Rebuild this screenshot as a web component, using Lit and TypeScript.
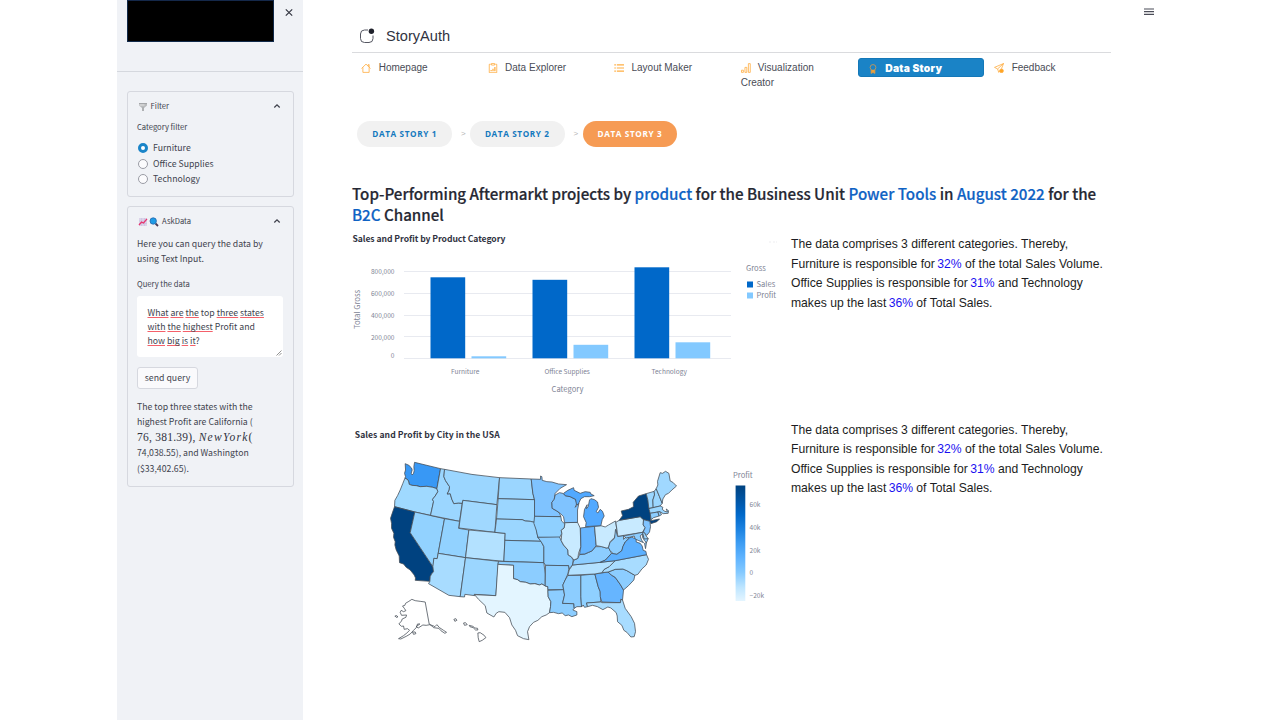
import { LitElement, html, svg, css } from "lit";
import { customElement } from "lit/decorators.js";

type Shape = [string, string];

const BASE = "#9bd6ff";

// Shapes are stored in three groups, each with its own horizontal origin.
const WEST: Shape[] = [
  ["#3898f5", "M75,41 L86,46 94,54 96,60 93,70 96,75 100,70 102,62 101,50 103,37 181,56 170,116 158,112 140,109 120,110 108,107 95,106 87,103 85,93 80,87 74,85 76,80 73,70 76,60Z"],
  ["#9fd9ff", "M74,85 L80,87 85,93 87,103 95,106 108,107 120,110 140,109 158,112 170,116 173,125 165,138 157,148 160,155 151,196 104,186 43,170 44,151 52,137 60,120 68,100Z"],
  ["#004280", "M43,170 L104,186 90,248 158,350 160,365 154,372 150,380 149,394 105,391 106,384 102,375 90,360 78,352 70,342 58,338 57,318 48,300 44,285 45,275 40,262 41,250 34,235 34,220 31,205 36,190Z"],
  ["#92d2ff", "M104,186 L193,206 174,310 171,326 161,325 159,348 158,350 90,248Z"],
  [BASE, "M181,56 L193,58 191,80 196,92 208,110 207,120 201,132 210,131 215,148 221,161 235,159 246,160 238,214 151,196 160,155 157,148 165,138 173,125 170,116Z"],
  [BASE, "M193,58 Q275,76 358,83 L350,164 248,151 246,160 235,159 221,161 215,148 210,131 201,132 207,120 208,110 196,92 191,80Z"],
  ["#a0d8ff", "M248,151 L350,164 344,247 236,234Z"],
  ["#92d2ff", "M193,206 L238,214 235,235 266,240 256,323 174,310Z"],
  ["#b3e1ff", "M266,240 L375,250 371,334 256,323Z"],
  ["#a8dcff", "M174,310 L256,323 240,440 206,436 145,401 149,394 150,380 154,372 160,365 158,350 161,325 171,326Z"],
  [BASE, "M256,323 L355,334 347,437 282,433 284,437 254,433 253,441 240,440Z"],
];

const CENTRAL: Shape[] = [
  [BASE, "M-2,83 L93,87 98,130 103,149 -6,146Z"],
  [BASE, "M-6,146 L103,149 104,208 103,217 90,214 75,213 66,209 -11,207Z"],
  [BASE, "M-11,207 L66,209 75,213 90,214 103,217 108,235 113,262 119,268 128,274 14,271 15,250 -16,247Z"],
  ["#92d2ff", "M14,271 L124,274 126,281 131,290 131,338 11,334Z"],
  ["#8ccdff", "M-5,334 L131,338 135,372 135,408 125,402 118,405 104,401 90,402 77,397 60,395 52,389 40,386 40,346 -7,343Z"],
  ["#e3f5ff", "M-7,343 L40,346 40,386 52,389 60,395 77,397 90,402 104,401 118,405 125,402 135,408 143,410 144,440 152,455 151,470 148,488 138,495 125,500 113,511 100,517 88,530 82,545 86,569 70,566 52,557 46,541 35,525 28,503 14,487 -4,485 -12,490 -19,501 -40,489 -45,467 -65,448 -77,434 -13,437Z"],
  ["#7fc3ff", "M93,87 L121,88 121,78 125,80 126,91 140,95 155,96 175,102 199,104 180,115 165,130 162,148 155,157 156,175 170,183 178,190 182,200 103,199 103,150 98,130Z"],
  ["#8fd0ff", "M103,199 L182,200 184,213 194,222 192,234 183,241 185,250 178,263 113,262 108,240 101,220Z"],
  ["#8ccdff", "M113,262 L178,261 183,272 190,285 203,300 204,315 213,320 219,330 217,345 206,357 205,347 136,346 131,338 131,290 126,280Z"],
  ["#8ccdff", "M136,346 L205,347 206,357 203,372 195,390 188,405 190,419 143,419 143,410 135,408Z"],
  ["#8ccdff", "M143,421 L190,419 193,435 187,460 221,461 222,475 218,480 230,485 230,495 215,500 205,495 195,497 186,489 175,491 160,487 148,488 151,470 152,455 144,440Z"],
  ["#8ccdff", "M203,376 L242,376 242,440 244,470 230,470 222,475 221,461 187,460 193,435 188,405 195,390Z"],
  ["#8fd0ff", "M242,376 L284,372 294,410 300,425 302,456 259,459 262,470 253,472 249,465 244,471 242,440Z"],
  ["#66b5ff", "M284,372 L324,366 333,375 345,382 360,403 370,420 367,450 362,448 361,458 305,456 300,440 300,425 294,410Z"],
  ["#a8dcff", "M259,459 L302,456 305,458 361,458 362,448 367,450 375,475 393,500 403,520 406,545 402,560 392,561 380,547 371,541 365,526 352,515 351,498 348,488 332,474 323,471 308,479 292,470 277,466 262,470Z"],
  ["#8ccdff", "M324,366 L345,358 368,357 380,362 404,376 401,390 385,407 370,420 360,403 345,382 333,375Z"],
  ["#a8dcff", "M345,332 L439,314 445,328 438,345 425,357 413,373 404,376 380,362 368,357 345,358 324,366 305,368 312,358 327,350Z"],
  ["#b3e1ff", "M217,345 L300,337 345,332 327,350 312,358 305,368 284,372 203,376 207,360Z"],
  ["#8ccdff", "M217,345 L221,330 232,326 238,314 254,312 265,307 275,303 286,290 305,290 318,294 325,293 334,310 316,330 300,337Z"],
  ["#c8eaff", "M193,218 L232,217 240,234 242,290 235,310 233,325 221,330 213,320 204,315 203,300 190,285 183,272 184,258 185,250 183,241 192,234 194,222Z"],
  ["#66b5ff", "M241,234 L283,229 288,287 275,303 265,307 254,312 238,313 242,290Z"],
  ["#c8eaff", "M283,229 L302,227 315,231 325,225 346,213 350,240 343,262 330,275 325,293 318,294 305,290 288,287Z"],
  ["#7fc3ff", "M165,135 L178,128 188,130 195,137 210,140 226,148 230,160 225,172 236,160 232,180 232,217 193,218 190,200 180,190 170,183 156,175 155,157 162,148Z"],
  ["#52a9ff", "M190,130 L203,121 220,113 222,121 240,130 255,125 270,127 272,132 282,137 268,140 253,140 242,146 234,163 229,164 226,148 210,140 195,137Z"],
  ["#52a9ff", "M268,150 L272,146 283,149 292,156 295,172 288,185 293,189 300,178 307,184 312,198 306,209 302,227 256,230 258,218 250,200 253,178 261,164 259,176 264,170Z"],
  ["#8ccdff", "M346,238 L352,259 370,257 370,268 378,261 388,264 375,276 368,290 365,302 350,313 340,312 330,302 325,293 329,278 343,265Z"],
  ["#5cb0ff", "M316,330 L334,310 350,313 365,302 368,290 375,276 388,264 395,261 400,264 408,266 408,276 420,280 426,288 429,301 437,304 439,314 345,332 300,337Z"],
];

const EAST: Shape[] = [
  ["#c8eaff", "M167,217 L177,211 240,200 250,209 249,225 255,233 247,247 173,259Z"],
  ["#004280", "M177,211 L187,197 183,183 205,178 220,170 219,157 235,138 258,131 263,150 266,170 270,190 272,212 298,207 290,215 272,221 269,214 250,209 240,200Z"],
  ["#7fc3ff", "M250,209 L269,214 271,230 268,246 260,256 249,246 255,233 249,225Z"],
  ["#8ccdff", "M190,258 L247,247 252,265 264,266 259,278 253,272 247,262 246,252 240,258 244,270 250,278 236,272 225,267 222,258 208,262 198,264Z"],
  [BASE, "M247,247 L252,247 258,258 264,266 252,267Z"],
  ["#8ccdff", "M253,280 L259,277 256,296Z"],
  [BASE, "M258,131 L282,124 283,135 278,150 279,173 266,175 263,150Z"],
  [BASE, "M282,124 L288,116 298,140 306,160 300,168 279,173 278,150 283,135Z"],
  ["#a0d8ff", "M288,116 L293,105 292,94 300,68 307,70 316,64 326,70 330,93 338,97 349,108 335,120 325,130 316,134 308,147 306,160 298,140Z"],
  [BASE, "M266,176 L300,168 308,172 306,178 314,184 322,186 318,177 325,182 324,190 309,191 299,185 270,190Z"],
  ["#8ccdff", "M270,190 L293,186 297,198 280,203 273,209Z"],
  ["#8ccdff", "M293,186 L299,185 304,194 297,198Z"],
];

const ISLANDS =
  "M135,126 L120,124 105,122 95,118 86,124 76,130 74,136 67,138 73,146 77,152 70,155 63,151 60,157 64,166 79,165 77,172 66,177 64,183 56,192 64,199 70,198 72,208 82,206 88,211 80,219 70,227 55,236 62,237 80,228 90,222 100,211 108,203 112,192 119,192 108,200 114,204 128,195 138,196 149,194 158,197 164,200 170,194 178,203 190,211 199,217 194,220 182,212 176,205 160,203 155,198 147,192Z M97,216 L105,216 107,221 100,223Z M44,168 L50,167 53,171 48,172Z M221,178 L227,176 230,181 224,184Z M250,189 L256,188 261,194 253,196Z M267,196 L278,199 284,204 292,205 293,210 286,210 279,203 269,200Z M293,219 L300,218 312,226 317,233 306,241 297,245 294,233Z";

const BARS = [
  { label: "Furniture", x: 430.5, sales: 81, profit: 2 },
  { label: "Office Supplies", x: 532.5, sales: 78.5, profit: 13.5 },
  { label: "Technology", x: 634.5, sales: 91, profit: 16 },
];

const icon = (body: unknown, size = 10) =>
  html`<svg class="icon" width=${size} height=${size} viewBox="0 0 16 16">${body}</svg>`;

const ICONS: Record<string, unknown> = {
  house: svg`<path d="M.8 8.800 8 1.800 15.200 8.800M3 7v8h10V7M11.500 5V2.500h1.500v4"/>`,
  clipboard: svg`<path d="M4.500 2H2v13.500h12V2h-2.500M5.500.700h5v2.600h-5z"/><path d="M5 13v-2M8 13V9M11 13V6.500" stroke-width="2"/>`,
  list: svg`<path d="M4.500 3H16M4.500 8H16M4.500 13H16M.5 3h2.500M.5 8h2.500M.5 13h2.500" stroke-width="1.700"/>`,
  chart: svg`<path d="M.8 11.500h3V15h-3zM6.300 7h3v8h-3zM11.800 1h3v14h-3z"/>`,
  award: svg`<circle cx="8" cy="5.500" r="4.600"/><path d="M5 9.500V15l3-1.500 3 1.500V9.500" fill="#e9a13b"/>`,
  send: svg`<path d="M15.300.800.800 7l5 2.500L15.300.800 12 9M5.800 9.500 7.500 15l2-3"/><circle cx="12" cy="12.500" r="3" fill="#ffa421"/>`,
};

const NAV = [
  ["house", "Homepage"],
  ["clipboard", "Data Explorer"],
  ["list", "Layout Maker"],
  ["chart", "Visualization Creator"],
  ["award", "Data Story"],
  ["send", "Feedback"],
];

@customElement("app-root")
export class AppRoot extends LitElement {
  static styles = css`
    :host {
      display: block;
      height: 720px;
      overflow: hidden;
      background: #fff;
      color: #31333f;
      font-family: "Noto Sans CJK SC", sans-serif;
      --arial: "Liberation Sans", Arial, sans-serif;
    }
    * { box-sizing: border-box; }
    svg { display: block; }
    .page { display: flex; width: 1046px; height: 720px; margin-left: 117px; }
    .sidebar { width: 186.400px; height: 720px; background: #f0f2f6; flex: none; color: #41434e; }
    .top { height: 72px; display: flex; padding-left: 10px; border-bottom: 1px solid #d5d8de; }
    .banner { width: 147px; height: 42px; background: #000; border: 1px solid #122a4a; border-top-color: #14284a; }
    .close { margin: 8px 0 0 11px; }
    .panel { margin: 19px 0 0 9.600px; border: 1px solid #d6d8df; border-radius: 3px; padding: 0 10px 0 9.400px; height: 106px; width: 167.400px; }
    .panel.ask { margin-top: 9px; height: 281px; }
    .summary { display: flex; align-items: center; height: 29px; font-size: 7.63px; line-height: 12px; }
    .summary .name { margin: -1px 0 0 3px; flex: 1; }
    .summary svg:first-child { margin-left: .6px; }
    .summary svg + svg { margin-left: 1.500px; }
    .summary .chev { margin: -1px 2px 0 0; }
    .label { font-size: 7.63px; line-height: 12px; }
    .radios { display: grid; grid-auto-rows: 15.8px; margin-top: 7px; }
    .radio { display: flex; align-items: center; gap: 5px; font-size: 8.72px; line-height: 13px; padding-left: 1px; }
    .radio span { margin-top: -1px; }
    .dot { width: 10px; height: 10px; border-radius: 50%; border: 1px solid #9a9ca5; background: #fbfbfd; }
    .dot.on { border: 3px solid #1a84c8; background: #fff; }
    .para { font-size: 8.73px; line-height: 15.3px; white-space: nowrap; }
    .ask .label { margin-top: 11px; }
    .area { position: relative; margin-top: 6px; height: 61px; width: 146px; background: #fff; border-radius: 3px; padding: 10.800px 10.500px; font-size: 8.73px; line-height: 13.7px; white-space: nowrap; }
    .typo { text-decoration-line: underline; text-decoration-style: solid; text-decoration-color: #f4606a; text-decoration-thickness: 1px; text-underline-offset: 1px; text-decoration-skip-ink: none; }
    .grip { position: absolute; right: 1px; bottom: 1px; }
    .button { display: flex; height: 22px; width: 61px; margin-top: 10px; align-items: center; justify-content: center; border: 1px solid #d6d8df; border-radius: 3px; background: #fafafc; font-size: 8.76px; line-height: 13px; padding-bottom: 1px; }
    .result { margin-top: 10px; line-height: 15.500px; }
    .math { font: italic 11.500px/15.500px "Liberation Serif", serif; display: block; color: #31333f; }
    .math i { letter-spacing: 1.250px; }
    .math b { font-weight: 400; font-style: normal; letter-spacing: .25px; }
    .main { flex: 1; padding-left: 48.600px; position: relative; }
    .menu { position: absolute; left: 840.600px; top: 8px; }
    .brand { display: flex; align-items: center; gap: 11px; height: 53px; width: 759px; padding: 20px 0 0 7px; border-bottom: 1px solid #dadbde; font: 14.6px/20px var(--arial); }
    .nav { display: grid; grid-template-columns: repeat(6, 126.400px); height: 67.500px; align-items: start; padding-top: 5px; font: 10px/14.5px var(--arial); color: #4a4c56; }
    .item { padding: 3px 9.500px; }
    .item .icon { display: inline-block; vertical-align: -1.500px; margin-right: 7.200px; }
    .item:last-child { padding-left: 10.500px; }
    .icon { fill: none; stroke: #ffae42; stroke-width: 1.300; }
    .item.active { background: #1a83c6; color: #fff; border-radius: 3px; height: 19px; border: 1px solid #1478b8; padding: 2px 9px; font: 900 10.300px/14.500px Inter, sans-serif; letter-spacing: .26px; white-space: nowrap; }
    .item.active .icon { stroke: #d69a4c; vertical-align: -2px; margin-right: 7.700px; }
    .steps { display: flex; align-items: center; padding-left: 5.400px; height: 27px; }
    .pill { width: 94.600px; height: 26px; border-radius: 13px; background: #f1f1f1; color: #1479be; font: 700 8.200px/26px "Open Sans", sans-serif; letter-spacing: .62px; text-align: center; }
    .pill.on { background: #f69b54; color: #fff; }
    .sep { width: 18px; padding-left: 9px; font: 8px/20px var(--arial); color: #b4b4b4; }
    .title { margin: 35.500px 0 0; font-size: 15.170px; font-weight: 500; line-height: 20.500px; white-space: nowrap; color: #262833; -webkit-text-stroke: .2px currentColor; }
    .title span { color: #0f62c4; }
    .row { display: grid; grid-template-columns: 439px 330px; }
    .row.first { height: 175px; margin-top: 5px; }
    .row svg { overflow: visible; }
    .text { font: 12.170px/19.500px var(--arial); color: #1c1d22; white-space: nowrap; padding-top: 6px; }
    .second .text { padding-top: 16.500px; }
    .text span { color: #1a10f0; margin-left: -1px; }
    .axis { font-size: 6.550px; fill: #808495; }
    .axislabel { font-size: 7.600px; fill: #808495; }
    .charttitle { font-size: 8.600px; font-weight: 600; fill: #31333f; }
    .state { stroke: #444c55; stroke-width: 2.300; stroke-linejoin: round; }
  `;

  private shapes(list: Shape[], dx: number) {
    return svg`<g transform="translate(${dx} 0)">${list.map(([fill, d]) => svg`<path class="state" fill=${fill} d=${d} />`)}</g>`;
  }

  private barChart() {
    return html`<svg width="430" height="175" viewBox="352 229 430 175">
      <text class="charttitle" x="352.400" y="242" textLength="153">Sales and Profit by Product Category</text>
      ${[271.5, 293.5, 315.5, 336.5, 358.5].map((y) => svg`<path d="M404 ${y}H731" stroke="#e8eaf0" stroke-width="1"/>`)}
      ${[["800,000", 274], ["600,000", 296], ["400,000", 317.5], ["200,000", 339.5], ["0", 358]].map(
        ([t, y]) => svg`<text class="axis" text-anchor="end" x="394.500" y=${y}>${t}</text>`
      )}
      ${BARS.map(
        (b) => svg`<rect x=${b.x} y=${358.3 - b.sales} width="34.700" height=${b.sales} fill="#0068c9"/>
        <rect x=${b.x + 41} y=${358.3 - b.profit} width="34.700" height=${b.profit} fill="#83c9ff"/>
        <text class="axis" text-anchor="middle" x=${b.x + 34.7} y="374">${b.label}</text>`
      )}
      <text class="axislabel" text-anchor="middle" x="567.500" y="391.500">Category</text>
      <text class="axislabel" text-anchor="middle" transform="translate(360 309.500) rotate(-90)">Total Gross</text>
      <text class="axislabel" x="746" y="271">Gross</text>
      <rect x="747" y="281.500" width="6" height="6" fill="#0068c9"/>
      <rect x="747" y="292.500" width="6" height="6" fill="#83c9ff"/>
      <text class="axislabel" x="756.500" y="287">Sales</text>
      <text class="axislabel" x="756.500" y="298">Profit</text>
      <path d="M769 242h2M773 242h2M776 242h1" stroke="#ededf0" stroke-width="1"/>
    </svg>`;
  }

  private mapChart() {
    return html`<svg width="430" height="250" viewBox="352 404 430 250">
      <defs><linearGradient id="ramp" x1="0" y1="0" x2="0" y2="1">
        <stop offset="0" stop-color="#004280"/><stop offset=".12" stop-color="#0054a3"/>
        <stop offset=".25" stop-color="#0068c9"/><stop offset=".38" stop-color="#1c83e1"/>
        <stop offset=".5" stop-color="#3d9df3"/><stop offset=".63" stop-color="#60b4ff"/>
        <stop offset=".75" stop-color="#83c9ff"/><stop offset=".88" stop-color="#bde5ff"/>
        <stop offset="1" stop-color="#e4f5ff"/>
      </linearGradient></defs>
      <text class="charttitle" x="354.700" y="437.500" textLength="145">Sales and Profit by City in the USA</text>
      <g transform="translate(380.200 450) scale(.33333)">
        ${this.shapes(WEST, 0)}${this.shapes(CENTRAL, 360)}${this.shapes(EAST, 540)}
        <path class="state" fill="none" transform="translate(0 330)" d=${ISLANDS} />
      </g>
      <text class="axislabel" x="733" y="477.500">Profit</text>
      <rect x="735.600" y="485.500" width="9.700" height="115.500" fill="url(#ramp)"/>
      ${[["60k", 507], ["40k", 529.5], ["20k", 552.5], ["0", 575], ["−20k", 597.5]].map(
        ([t, y]) => svg`<text class="axis" x="749.500" y=${y}>${t}</text>`
      )}
    </svg>`;
  }

  private summaryText() {
    return html`<div class="text">The data comprises 3 different categories. Thereby,<br />Furniture is responsible for <span>32%</span> of the total Sales Volume.<br />Office Supplies is responsible for <span>31%</span> and Technology<br />makes up the last <span>36%</span> of Total Sales.</div>`;
  }

  private chevron() {
    return html`<svg class="chev" width="8" height="6" viewBox="0 0 8 6"><path d="M1.300 4.500 4 1.800 6.700 4.500" fill="none" stroke="#3c3e49" stroke-width="1.200"/></svg>`;
  }

  render() {
    const t = (s: string) => html`<span class="typo">${s}</span>`;
    return html`<div class="page">
      <aside class="sidebar">
        <div class="top">
          <div class="banner"></div>
          <svg class="close" width="8" height="9" viewBox="0 0 8 9"><path d="M.8 1.300 7.200 7.700M7.200 1.300.8 7.700" stroke="#31333f" stroke-width="1.150"/></svg>
        </div>
        <section class="panel filter">
          <div class="summary">
            <svg width="10" height="10" viewBox="0 0 10 10"><path d="M1 1.500h8v2L6 6v3H4V6L1 3.500z" fill="#b9bbbd"/><path d="M1 1.500h8M5 5v4" stroke="#a4a6a9"/><path d="M1.500 3h5" stroke="#e5e5e5"/></svg>
            <span class="name">Filter</span>${this.chevron()}
          </div>
          <div class="label">Category filter</div>
          <div class="radios">
            ${["Furniture", "Office Supplies", "Technology"].map((n, i) => html`<div class="radio"><i class="dot ${i ? "" : "on"}"></i><span>${n}</span></div>`)}
          </div>
        </section>
        <section class="panel ask">
          <div class="summary">
            <svg width="10" height="10" viewBox="0 0 10 10"><rect x="1" y="1" width="8" height="8" fill="#dcd3ea"/><path d="M1 4h8M1 6.500h8M3.500 1v8M6.500 1v8" stroke="#c5bddb" stroke-width=".5"/><path d="M1 8 3.500 5 5.500 6 9 1.800" fill="none" stroke="#e8356f" stroke-width="1.300"/></svg>
            <svg width="10" height="10" viewBox="0 0 10 10"><path d="M6.500 6.500 9 9" stroke="#4b3c55" stroke-width="1.800"/><circle cx="4.200" cy="4" r="3.200" fill="#1e9ce6" stroke="#2868ad" stroke-width=".8"/></svg>
            <span class="name">AskData</span>${this.chevron()}
          </div>
          <div class="para intro">Here you can query the data by<br />using Text Input.</div>
          <div class="label">Query the data</div>
          <div class="area">${t("What")} ${t("are")} ${t("the")} top ${t("three")} ${t("states")}<br />${t("with")} ${t("the")} ${t("highest")} Profit and<br />${t("how")} ${t("big")} ${t("is")} ${t("it")}?
            <svg class="grip" width="6" height="6" viewBox="0 0 6 6"><path d="M.5 5.500 5.500.500M3 5.500 5.500 3" stroke="#777" stroke-width=".8"/></svg>
          </div>
          <div class="button">send query</div>
          <div class="para result">The top three states with the<br />highest Profit are California (<span class="math"><b>76, 381.39), </b><i>NewYork</i><b>(</b></span>74,038.55), and Washington<br />($33,402.65).</div>
        </section>
      </aside>
      <main class="main">
        <svg class="menu" width="10" height="8" viewBox="0 0 10 8"><path d="M0 1h10M0 3.700h10M0 6.400h10" stroke="#4b4d58" stroke-width="1.200"/></svg>
        <header class="brand">
          <svg width="16" height="16" viewBox="0 0 16 16"><path d="M9 2H5.500Q1.500 2 1.500 6v4.500q0 4 4 4H10q4 0 4-4V7.500" fill="none" stroke="#555762" stroke-width="1"/><circle cx="12.400" cy="3.200" r="2.700" fill="#1f212b"/></svg>
          <span>StoryAuth</span>
        </header>
        <nav class="nav">
          ${NAV.map(([i, n]) => html`<div class="item ${n === "Data Story" ? "active" : ""}">${icon(ICONS[i])}${n}</div>`)}
        </nav>
        <div class="steps">
          <div class="pill">DATA STORY 1</div><div class="sep">&gt;</div>
          <div class="pill">DATA STORY 2</div><div class="sep">&gt;</div>
          <div class="pill on">DATA STORY 3</div>
        </div>
        <h1 class="title">Top-Performing Aftermarkt projects by <span>product</span> for the Business Unit <span>Power Tools</span> in <span>August 2022</span> for the<br /><span>B2C</span> Channel</h1>
        <div class="row first">${this.barChart()}${this.summaryText()}</div>
        <div class="row second">${this.mapChart()}${this.summaryText()}</div>
      </main>
    </div>`;
  }
}
